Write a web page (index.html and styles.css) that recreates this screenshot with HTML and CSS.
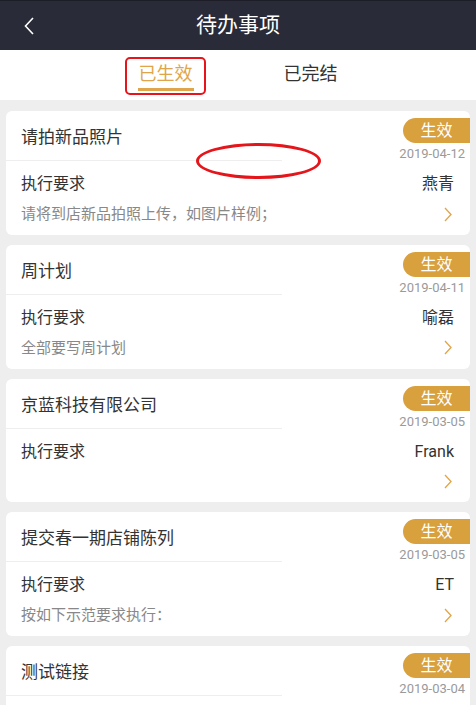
FILE: index.html
```html
<!DOCTYPE html>
<html lang="zh-CN">
  <head>
    <meta charset="UTF-8" />
    <meta name="viewport" content="width=device-width,initial-scale=1.0" />
    <title>待办事项</title>
    <link rel="stylesheet" href="styles.css">
  </head>
  <body>
    <header class="top-bar">
      <a class="back-btn" href="#">
        <svg width="10" height="18" viewBox="0 0 10 18"><polyline points="9,1 1.5,9 9,17" fill="none" stroke="#fff" stroke-width="1.6"/></svg>
      </a>
      <h1>待办事项</h1>
    </header>

    <nav class="tabs">
      <div class="tab active">
        已生效
        <span class="tab-line"></span>
        <span class="mark-box"></span>
      </div>
      <div class="tab">
        已完结
        <span class="tab-line"></span>
      </div>
    </nav>

    <div class="task-list">
      <div class="task-card">
        <div class="card-top">
          <div class="card-title">请拍新品照片</div>
          <div class="card-meta">
            <span class="badge">生效</span>
            <span class="date">2019-04-12</span>
          </div>
        </div>
        <div class="card-row">
          <span class="label">执行要求</span>
          <span class="owner">燕青</span>
        </div>
        <div class="card-row sub">
          <span class="desc">请将到店新品拍照上传，如图片样例；</span>
          <svg class="arrow" width="8" height="15" viewBox="0 0 8 15"><polyline points="1,1 7,7.5 1,14" fill="none" stroke="#e0a54a" stroke-width="1.3"/></svg>
        </div>
        <span class="mark-ring"></span>
      </div>

      <div class="task-card">
        <div class="card-top">
          <div class="card-title">周计划</div>
          <div class="card-meta">
            <span class="badge">生效</span>
            <span class="date">2019-04-11</span>
          </div>
        </div>
        <div class="card-row">
          <span class="label">执行要求</span>
          <span class="owner">喻磊</span>
        </div>
        <div class="card-row sub">
          <span class="desc">全部要写周计划</span>
          <svg class="arrow" width="8" height="15" viewBox="0 0 8 15"><polyline points="1,1 7,7.5 1,14" fill="none" stroke="#e0a54a" stroke-width="1.3"/></svg>
        </div>
      </div>

      <div class="task-card">
        <div class="card-top">
          <div class="card-title">京蓝科技有限公司</div>
          <div class="card-meta">
            <span class="badge">生效</span>
            <span class="date">2019-03-05</span>
          </div>
        </div>
        <div class="card-row">
          <span class="label">执行要求</span>
          <span class="owner">Frank</span>
        </div>
        <div class="card-row sub">
          <span class="desc"></span>
          <svg class="arrow" width="8" height="15" viewBox="0 0 8 15"><polyline points="1,1 7,7.5 1,14" fill="none" stroke="#e0a54a" stroke-width="1.3"/></svg>
        </div>
      </div>

      <div class="task-card">
        <div class="card-top">
          <div class="card-title">提交春一期店铺陈列</div>
          <div class="card-meta">
            <span class="badge">生效</span>
            <span class="date">2019-03-05</span>
          </div>
        </div>
        <div class="card-row">
          <span class="label">执行要求</span>
          <span class="owner">ET</span>
        </div>
        <div class="card-row sub">
          <span class="desc">按如下示范要求执行：</span>
          <svg class="arrow" width="8" height="15" viewBox="0 0 8 15"><polyline points="1,1 7,7.5 1,14" fill="none" stroke="#e0a54a" stroke-width="1.3"/></svg>
        </div>
      </div>

      <div class="task-card">
        <div class="card-top">
          <div class="card-title">测试链接</div>
          <div class="card-meta">
            <span class="badge">生效</span>
            <span class="date">2019-03-04</span>
          </div>
        </div>
      </div>
    </div>
  </body>
</html>
```

FILE: styles.css
```css
* {
  margin: 0;
  padding: 0;
  box-sizing: border-box;
}
html, body {
  font-family: Roboto, "Noto Sans CJK SC", sans-serif;
  background: #eeeeee;
  color: #333;
}
.top-bar {
  position: relative;
  height: 50px;
  border-top: 1px solid #1c1d26;
  background: #292b38;
  display: flex;
  align-items: center;
  justify-content: center;
}
.top-bar h1 {
  font-size: 21px;
  font-weight: 400;
  color: #fff;
  line-height: 49px;
}
.back-btn {
  position: absolute;
  left: 24px;
  top: 16px;
  display: block;
  width: 10px;
  height: 18px;
}
.tabs {
  height: 50px;
  background: #fff;
  display: flex;
  justify-content: center;
  gap: 89px;
  padding-top: 12px;
}
.tab {
  position: relative;
  display: flex;
  flex-direction: column;
  align-items: center;
  font-size: 18px;
  line-height: 24px;
  color: #333;
}
.tab-line {
  display: block;
  width: 56px;
  height: 3px;
  margin-top: 2px;
}
.tab.active {
  color: #e0a54a;
}
.tab.active .tab-line {
  background: #e0a54a;
}
.mark-box {
  position: absolute;
  left: -13px;
  top: -5px;
  width: 81px;
  height: 38px;
  border: 2.5px solid #e8141c;
  border-radius: 5px;
}
.task-list {
  padding: 11px 6px 0;
  display: flex;
  flex-direction: column;
  gap: 10px;
}
.task-card {
  position: relative;
  background: #fff;
  border-radius: 6px;
  height: 123.75px;
}
.card-top {
  display: flex;
  justify-content: space-between;
  height: 50px;
}
.card-title {
  width: 276px;
  font-size: 17px;
  line-height: 24px;
  padding: 14px 15px 11px;
  border-bottom: 1px solid #eeeeee;
}
.card-meta {
  display: flex;
  flex-direction: column;
  align-items: flex-end;
  padding-top: 7px;
}
.badge {
  width: 67px;
  height: 25px;
  line-height: 25px;
  text-align: center;
  background: #d9a03e;
  color: #fff;
  font-size: 16px;
  border-radius: 13px 0 0 13px;
}
.date {
  margin-top: 3px;
  margin-right: 5px;
  font-size: 13px;
  line-height: 15px;
  color: #9a9a9a;
}
.card-row {
  display: flex;
  justify-content: space-between;
  align-items: center;
  padding: 11px 16px 0 15px;
  line-height: 24px;
  font-size: 16px;
}
.card-row.sub {
  padding-top: 7px;
  line-height: 22px;
}
.label {
  color: #333;
}
.owner {
  color: #333;
}
.desc {
  font-size: 15px;
  color: #888;
  min-height: 22px;
}
.arrow {
  margin-right: 2px;
}
.mark-ring {
  position: absolute;
  left: 190px;
  top: 32px;
  width: 125px;
  height: 36px;
  border: 3px solid #e4161b;
  border-radius: 50%;
}
```
